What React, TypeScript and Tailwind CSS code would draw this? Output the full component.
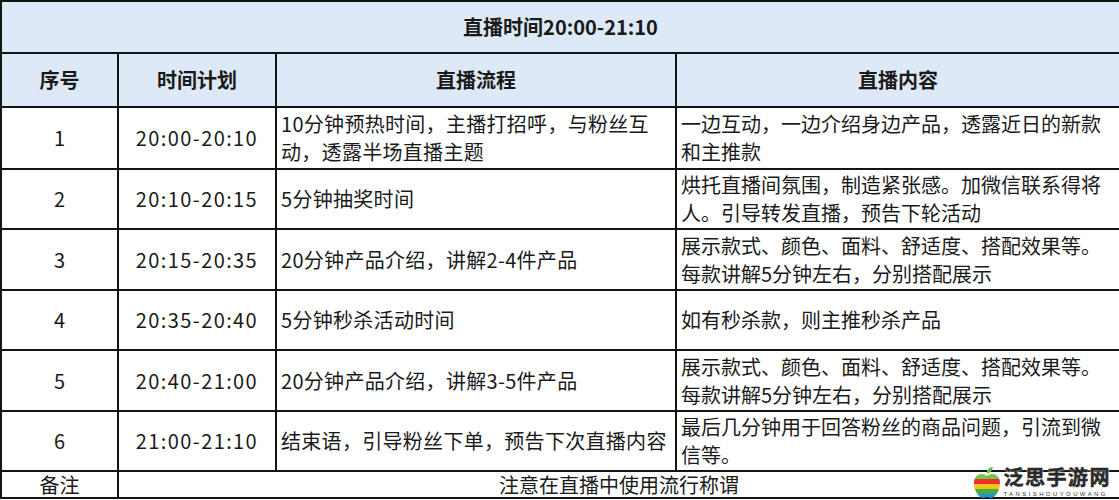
import React from "react";

type Row = {
	no: string;
	time: string;
	flow: string[];
	content: string[];
	h: string;
};

const rows: Row[] = [
	{
		no: "1",
		time: "20:00-20:10",
		flow: ["10分钟预热时间，主播打招呼，与粉丝互", "动，透露半场直播主题"],
		content: ["一边互动，一边介绍身边产品，透露近日的新款", "和主推款"],
		h: "h-[62px]",
	},
	{
		no: "2",
		time: "20:10-20:15",
		flow: ["5分钟抽奖时间"],
		content: ["烘托直播间氛围，制造紧张感。加微信联系得将", "人。引导转发直播，预告下轮活动"],
		h: "h-[60px]",
	},
	{
		no: "3",
		time: "20:15-20:35",
		flow: ["20分钟产品介绍，讲解2-4件产品"],
		content: ["展示款式、颜色、面料、舒适度、搭配效果等。", "每款讲解5分钟左右，分别搭配展示"],
		h: "h-[61px]",
	},
	{
		no: "4",
		time: "20:35-20:40",
		flow: ["5分钟秒杀活动时间"],
		content: ["如有秒杀款，则主推秒杀产品"],
		h: "h-[60px]",
	},
	{
		no: "5",
		time: "20:40-21:00",
		flow: ["20分钟产品介绍，讲解3-5件产品"],
		content: ["展示款式、颜色、面料、舒适度、搭配效果等。", "每款讲解5分钟左右，分别搭配展示"],
		h: "h-[61px]",
	},
	{
		no: "6",
		time: "21:00-21:10",
		flow: ["结束语，引导粉丝下单，预告下次直播内容"],
		content: ["最后几分钟用于回答粉丝的商品问题，引流到微", "信等。"],
		h: "h-[60px]",
	},
];

const font = { fontFamily: '"Noto Sans CJK SC", "Noto Sans", sans-serif' };

function Lines({ lines }: { lines: string[] }) {
	return (
		<>
			{lines.map((l) => (
				<div key={l} className="whitespace-nowrap">
					{l}
				</div>
			))}
		</>
	);
}

function Watermark() {
	return (
		<div className="absolute right-[8px] bottom-[2px] flex items-end gap-[3px]">
			<svg width="28" height="31" viewBox="0 0 28 31">
				<path d="M14 7 C13 3 16 0 20 0 C19 4 17 6 14 7 Z" fill="#6cc04a" />
				<clipPath id="apple">
					<path d="M14 9 C9 5 1 7 1 16 C1 24 6 31 10 31 C12 31 13 30 14 30 C15 30 16 31 18 31 C22 31 27 24 27 16 C27 7 19 5 14 9 Z" />
				</clipPath>
				<g clipPath="url(#apple)">
					<rect x="0" y="6" width="28" height="6" fill="#7cc24b" />
					<rect x="0" y="12" width="28" height="5" fill="#e8322d" />
					<rect x="0" y="17" width="28" height="5" fill="#f7c21a" />
					<rect x="0" y="22" width="28" height="5" fill="#3fae49" />
					<rect x="0" y="27" width="28" height="5" fill="#2a8fd4" />
				</g>
			</svg>
			<div className="flex flex-col items-start">
				<span
					className="block text-[20px] leading-[22px] font-bold tracking-[1.5px] text-[#2a2a2a]"
					style={{ ...font, WebkitTextStroke: "0.5px #2a2a2a", textShadow: "0 0 2px #fff, 0 0 2px #fff" }}
				>
					泛思手游网
				</span>
				<span
					className="mt-[3px] block text-[6px] leading-[7px] tracking-[2.4px] text-[#333]"
					style={{ fontFamily: '"Liberation Sans", sans-serif' }}
				>
					TANSISHOUYOUWANG
				</span>
			</div>
		</div>
	);
}

export default function App() {
	const cell = "border-2 border-[#141414] p-0";
	return (
		<div className="relative h-[500px] w-[1119px] overflow-hidden bg-white text-[#1a1a1a]" style={font}>
			<table className="w-[1119px] table-fixed border-collapse text-[20px]">
				<colgroup>
					<col className="w-[117px]" />
					<col className="w-[158px]" />
					<col className="w-[400px]" />
					<col className="w-[444px]" />
				</colgroup>
				<tbody>
					<tr className="h-[52px] bg-[#dde9f6]">
						<td colSpan={4} className={`${cell} text-center font-bold`}>
							直播时间20:00-21:10
						</td>
					</tr>
					<tr className="h-[54px] bg-[#dde9f6] font-bold">
						<td className={`${cell} text-center`}>序号</td>
						<td className={`${cell} text-center`}>时间计划</td>
						<td className={`${cell} text-center`}>直播流程</td>
						<td className={`${cell} text-center`}>直播内容</td>
					</tr>
					{rows.map((r) => (
						<tr key={r.no} className={r.h}>
							<td className={`${cell} text-center`}>{r.no}</td>
							<td className={`${cell} text-center tracking-[1.4px]`}>{r.time}</td>
							<td className={`${cell} px-[4px] leading-[28px] tracking-[0.3px]`}>
								<Lines lines={r.flow} />
							</td>
							<td className={`${cell} px-[4px] leading-[28px]`}>
								<Lines lines={r.content} />
							</td>
						</tr>
					))}
					<tr className="h-[27px]">
						<td className={`${cell} text-center leading-[23px]`}>备注</td>
						<td colSpan={3} className={`${cell} text-center leading-[23px]`}>
							注意在直播中使用流行称谓
						</td>
					</tr>
				</tbody>
			</table>
			<Watermark />
		</div>
	);
}
